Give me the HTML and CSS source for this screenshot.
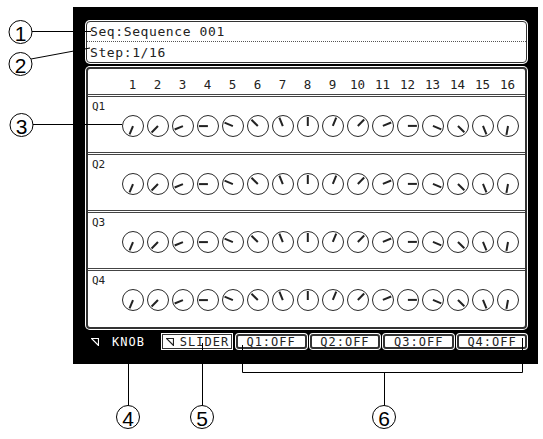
FILE: index.html
```html
<!DOCTYPE html>
<html>
<head>
<meta charset="utf-8">
<link rel="stylesheet" href="styles.css">
</head>
<body>
<div class="page">
  <div class="lcd">
    <div class="header">
      <div class="hline seq">Seq:Sequence 001</div>
      <div class="hline">Step:1/16</div>
    </div>
    <div class="grid">
      <div class="nums cols">
        <span>1</span><span>2</span><span>3</span><span>4</span><span>5</span><span>6</span><span>7</span><span>8</span><span>9</span><span>10</span><span>11</span><span>12</span><span>13</span><span>14</span><span>15</span><span>16</span>
      </div>
      <div class="row">
        <div class="qlabel">Q1</div>
        <div class="knobs cols">
          <i class="knob" style="--a:-157.5deg"></i><i class="knob" style="--a:-135deg"></i><i class="knob" style="--a:-112.5deg"></i><i class="knob" style="--a:-90deg"></i><i class="knob" style="--a:-67.5deg"></i><i class="knob" style="--a:-45deg"></i><i class="knob" style="--a:-22.5deg"></i><i class="knob" style="--a:0deg"></i><i class="knob" style="--a:22.5deg"></i><i class="knob" style="--a:45deg"></i><i class="knob" style="--a:67.5deg"></i><i class="knob" style="--a:90deg"></i><i class="knob" style="--a:112.5deg"></i><i class="knob" style="--a:135deg"></i><i class="knob" style="--a:157.5deg"></i><i class="knob" style="--a:190deg"></i>
        </div>
      </div>
      <div class="row">
        <div class="qlabel">Q2</div>
        <div class="knobs cols">
          <i class="knob" style="--a:-157.5deg"></i><i class="knob" style="--a:-135deg"></i><i class="knob" style="--a:-112.5deg"></i><i class="knob" style="--a:-90deg"></i><i class="knob" style="--a:-67.5deg"></i><i class="knob" style="--a:-45deg"></i><i class="knob" style="--a:-22.5deg"></i><i class="knob" style="--a:0deg"></i><i class="knob" style="--a:22.5deg"></i><i class="knob" style="--a:45deg"></i><i class="knob" style="--a:67.5deg"></i><i class="knob" style="--a:90deg"></i><i class="knob" style="--a:112.5deg"></i><i class="knob" style="--a:135deg"></i><i class="knob" style="--a:157.5deg"></i><i class="knob" style="--a:190deg"></i>
        </div>
      </div>
      <div class="row">
        <div class="qlabel">Q3</div>
        <div class="knobs cols">
          <i class="knob" style="--a:-157.5deg"></i><i class="knob" style="--a:-135deg"></i><i class="knob" style="--a:-112.5deg"></i><i class="knob" style="--a:-90deg"></i><i class="knob" style="--a:-67.5deg"></i><i class="knob" style="--a:-45deg"></i><i class="knob" style="--a:-22.5deg"></i><i class="knob" style="--a:0deg"></i><i class="knob" style="--a:22.5deg"></i><i class="knob" style="--a:45deg"></i><i class="knob" style="--a:67.5deg"></i><i class="knob" style="--a:90deg"></i><i class="knob" style="--a:112.5deg"></i><i class="knob" style="--a:135deg"></i><i class="knob" style="--a:157.5deg"></i><i class="knob" style="--a:190deg"></i>
        </div>
      </div>
      <div class="row last">
        <div class="qlabel">Q4</div>
        <div class="knobs cols">
          <i class="knob" style="--a:-157.5deg"></i><i class="knob" style="--a:-135deg"></i><i class="knob" style="--a:-112.5deg"></i><i class="knob" style="--a:-90deg"></i><i class="knob" style="--a:-67.5deg"></i><i class="knob" style="--a:-45deg"></i><i class="knob" style="--a:-22.5deg"></i><i class="knob" style="--a:0deg"></i><i class="knob" style="--a:22.5deg"></i><i class="knob" style="--a:45deg"></i><i class="knob" style="--a:67.5deg"></i><i class="knob" style="--a:90deg"></i><i class="knob" style="--a:112.5deg"></i><i class="knob" style="--a:135deg"></i><i class="knob" style="--a:157.5deg"></i><i class="knob" style="--a:190deg"></i>
        </div>
      </div>
    </div>
    <div class="bar">
      <div class="tab active"><svg class="tri" width="8" height="8" viewBox="0 0 8 8"><path d="M0.5 0.5 H7.5 V7.5 Z" fill="none" stroke="currentColor" stroke-width="1.2"/></svg><span>KNOB</span></div>
      <div class="tab"><svg class="tri" width="8" height="8" viewBox="0 0 8 8"><path d="M0.5 0.5 H7.5 V7.5 Z" fill="none" stroke="currentColor" stroke-width="1.2"/></svg><span>SLIDER</span></div>
      <div class="qbtn">Q1:OFF</div>
      <div class="qbtn">Q2:OFF</div>
      <div class="qbtn">Q3:OFF</div>
      <div class="qbtn q4">Q4:OFF</div>
    </div>
  </div>

  <svg class="callouts" width="543" height="439" viewBox="0 0 543 439">
    <g fill="none" stroke="#000" stroke-width="1">
      <circle cx="20.5" cy="32" r="11.5"/>
      <circle cx="20.5" cy="64" r="11.5"/>
      <circle cx="21.5" cy="125" r="11.5"/>
      <circle cx="128" cy="417" r="11.5"/>
      <circle cx="202" cy="417" r="11.5"/>
      <circle cx="384" cy="417" r="11.5"/>
      <path d="M32 31.5 H91"/>
      <path d="M31 59 L90 48"/>
      <path d="M33 124.5 H122"/>
      <path d="M128.5 405.5 V343"/>
      <path d="M202.5 405.5 V343"/>
      <path d="M384.5 405.5 V372.5"/>
      <path d="M242.5 345 V372.5 H522.5 V338"/>
    </g>
    <g class="cnum" fill="#000">
      <text x="20.5" y="33">1</text>
      <text x="20.5" y="65">2</text>
      <text x="21.5" y="126">3</text>
      <text x="128" y="418">4</text>
      <text x="202" y="418">5</text>
      <text x="384" y="418">6</text>
    </g>
  </svg>
</div>
</body>
</html>
```

FILE: styles.css
```css
* { box-sizing: border-box; }
body { margin: 0; background: #fff; }

.page {
  position: relative;
  width: 543px;
  height: 439px;
  overflow: hidden;
  font-family: "DejaVu Sans Mono", monospace;
  color: #222;
}

.lcd {
  margin: 7px 0 0 73px;
  width: 465px;
  height: 357px;
  background: #000;
  padding: 14px 11px 0 13px;
  display: flex;
  flex-direction: column;
}

.header {
  height: 42px;
  background: #fff;
  border: 1.5px solid #333;
  border-radius: 4px;
  box-shadow: 0 0 0 1px #fff;
  display: flex;
  flex-direction: column;
}

.hline {
  flex: 1;
  padding-left: 3px;
  font-size: 13px;
  letter-spacing: 0.6px;
  display: flex;
  align-items: center;
}
.hline.seq {
  flex: 0 0 20px;
  border-bottom: 1px dotted #555;
}

.grid {
  margin-top: 4px;
  height: 262px;
  background: #fff;
  border: 2px solid #333;
  border-radius: 4px;
  box-shadow: 0 0 0 1px #fff;
  display: flex;
  flex-direction: column;
}

.cols {
  display: grid;
  grid-template-columns: repeat(16, 25px);
  padding-left: 32px;
}

.nums {
  height: 28px;
  padding-top: 8px;
  line-height: 16px;
  font-size: 12.5px;
  text-align: center;
  border-bottom: 3px double #444;
}

.row {
  height: 58px;
  border-bottom: 3px double #444;
  display: flex;
  flex-direction: column;
}
.row.last { border-bottom: none; flex: 1; }

.qlabel {
  padding: 4px 0 0 4px;
  font-size: 11px;
  line-height: 12px;
  height: 16px;
}

.knobs { margin-top: 2px; justify-items: center; }

.knob {
  position: relative;
  display: block;
  width: 22px;
  height: 22px;
  border: 1.3px solid #2a2a2a;
  border-radius: 50%;
}
.knob::after {
  content: "";
  position: absolute;
  left: 50%;
  top: 50%;
  width: 1.8px;
  height: 9px;
  margin-left: -0.9px;
  background: #222;
  transform-origin: 50% 0;
  transform: rotate(calc(var(--a) + 180deg));
}

.bar {
  margin-top: 5px;
  height: 15px;
  display: flex;
  font-size: 12px;
  letter-spacing: 1px;
}

.tab {
  width: 70px;
  margin-right: 4px;
  display: flex;
  align-items: center;
  background: #fff;
  border: 1.5px solid #333;
  box-shadow: 0 0 0 1px #fff;
  padding-left: 3px;
  gap: 6px;
}
.tab.active {
  margin-left: 1px;
  width: 71px;
  background: #000;
  color: #fff;
  border-color: #000;
  box-shadow: none;
  gap: 13px;
}
.tri { flex: none; }

.qbtn {
  width: 71px;
  margin-right: 3px;
  background: #fff;
  border: 2px solid #333;
  border-radius: 3px;
  box-shadow: 0 0 0 1px #fff;
  display: flex;
  align-items: center;
  justify-content: center;
}
.qbtn.q4 { width: 70px; margin-right: 0; }

.callouts {
  position: absolute;
  left: 0;
  top: 0;
}
.cnum text {
  font-family: "Liberation Sans", Arial, sans-serif;
  font-size: 21px;
  text-anchor: middle;
  dominant-baseline: central;
}
```
